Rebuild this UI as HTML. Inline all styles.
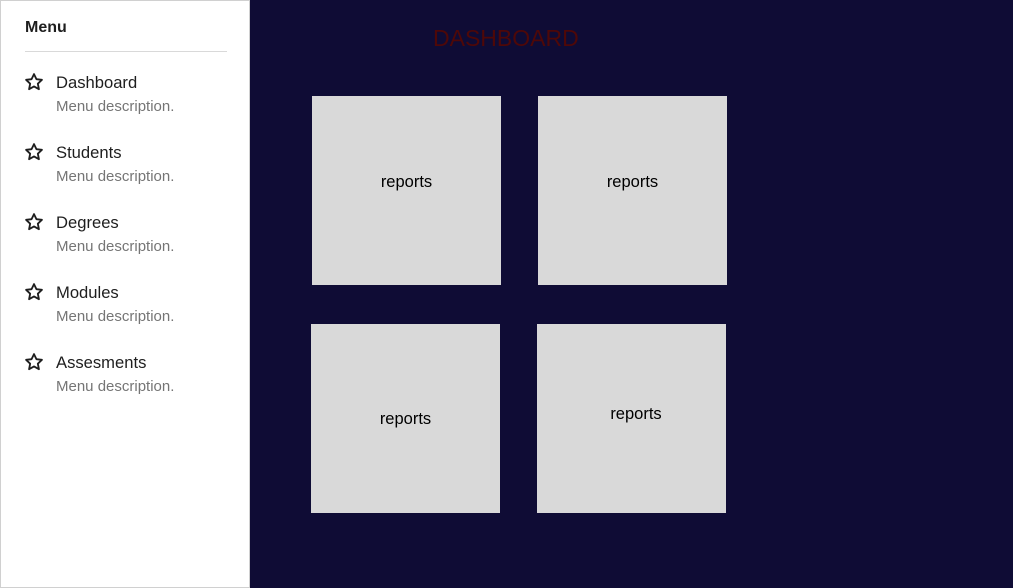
<!DOCTYPE html>
<html><head><style>
body{margin:0;width:1013px;height:588px;background:#0f0c35;font-family:"Liberation Sans",sans-serif;position:relative;overflow:hidden}
.side{position:absolute;left:0;top:0;width:248px;height:586px;background:#fff;border:1px solid #d0d0d0}
.h{position:absolute;left:24px;top:18px;font-size:16px;font-weight:bold;color:#1e1e1e}
.hr{position:absolute;left:24px;top:50px;width:202px;height:1px;background:#d9d9d9}
.it{position:absolute;left:24px}
.it svg{position:absolute;left:0;top:-1px}
.t{position:absolute;left:32px;top:0px;font-size:16.6px;color:#1e1e1e;white-space:nowrap}
.d{position:absolute;left:32px;top:25px;font-size:15px;color:#757575;white-space:nowrap}
.title{position:absolute;left:433px;top:25px;font-size:23px;color:#4e0808}
.card{position:absolute;width:189px;height:189px;background:#d9d9d9;font-size:16.5px;color:#000;text-align:center;box-sizing:border-box}
</style></head><body>
<div class="side">
<div class="h">Menu</div><div class="hr"></div>
</div>
<div class="it" style="top:73px"><svg width="20" height="20" viewBox="0 0 24 24"><path d="M12 2.5l2.9 6.1 6.6.8-4.9 4.6 1.3 6.6L12 17.3l-5.9 3.3 1.3-6.6-4.9-4.6 6.6-.8z" fill="none" stroke="#1e1e1e" stroke-width="2.2" stroke-linejoin="round"/></svg><div class="t">Dashboard</div><div class="d">Menu description.</div></div>
<div class="it" style="top:143px"><svg width="20" height="20" viewBox="0 0 24 24"><path d="M12 2.5l2.9 6.1 6.6.8-4.9 4.6 1.3 6.6L12 17.3l-5.9 3.3 1.3-6.6-4.9-4.6 6.6-.8z" fill="none" stroke="#1e1e1e" stroke-width="2.2" stroke-linejoin="round"/></svg><div class="t">Students</div><div class="d">Menu description.</div></div>
<div class="it" style="top:213px"><svg width="20" height="20" viewBox="0 0 24 24"><path d="M12 2.5l2.9 6.1 6.6.8-4.9 4.6 1.3 6.6L12 17.3l-5.9 3.3 1.3-6.6-4.9-4.6 6.6-.8z" fill="none" stroke="#1e1e1e" stroke-width="2.2" stroke-linejoin="round"/></svg><div class="t">Degrees</div><div class="d">Menu description.</div></div>
<div class="it" style="top:283px"><svg width="20" height="20" viewBox="0 0 24 24"><path d="M12 2.5l2.9 6.1 6.6.8-4.9 4.6 1.3 6.6L12 17.3l-5.9 3.3 1.3-6.6-4.9-4.6 6.6-.8z" fill="none" stroke="#1e1e1e" stroke-width="2.2" stroke-linejoin="round"/></svg><div class="t">Modules</div><div class="d">Menu description.</div></div>
<div class="it" style="top:353px"><svg width="20" height="20" viewBox="0 0 24 24"><path d="M12 2.5l2.9 6.1 6.6.8-4.9 4.6 1.3 6.6L12 17.3l-5.9 3.3 1.3-6.6-4.9-4.6 6.6-.8z" fill="none" stroke="#1e1e1e" stroke-width="2.2" stroke-linejoin="round"/></svg><div class="t">Assesments</div><div class="d">Menu description.</div></div>
<div class="title">DASHBOARD</div>
<div class="card" style="left:312px;top:96px;padding-top:77px">reports</div>
<div class="card" style="left:538px;top:96px;padding-top:77px">reports</div>
<div class="card" style="left:311px;top:324px;padding-top:86px">reports</div>
<div class="card" style="left:537px;top:324px;padding-top:81px;padding-left:9px">reports</div>
</body></html>
